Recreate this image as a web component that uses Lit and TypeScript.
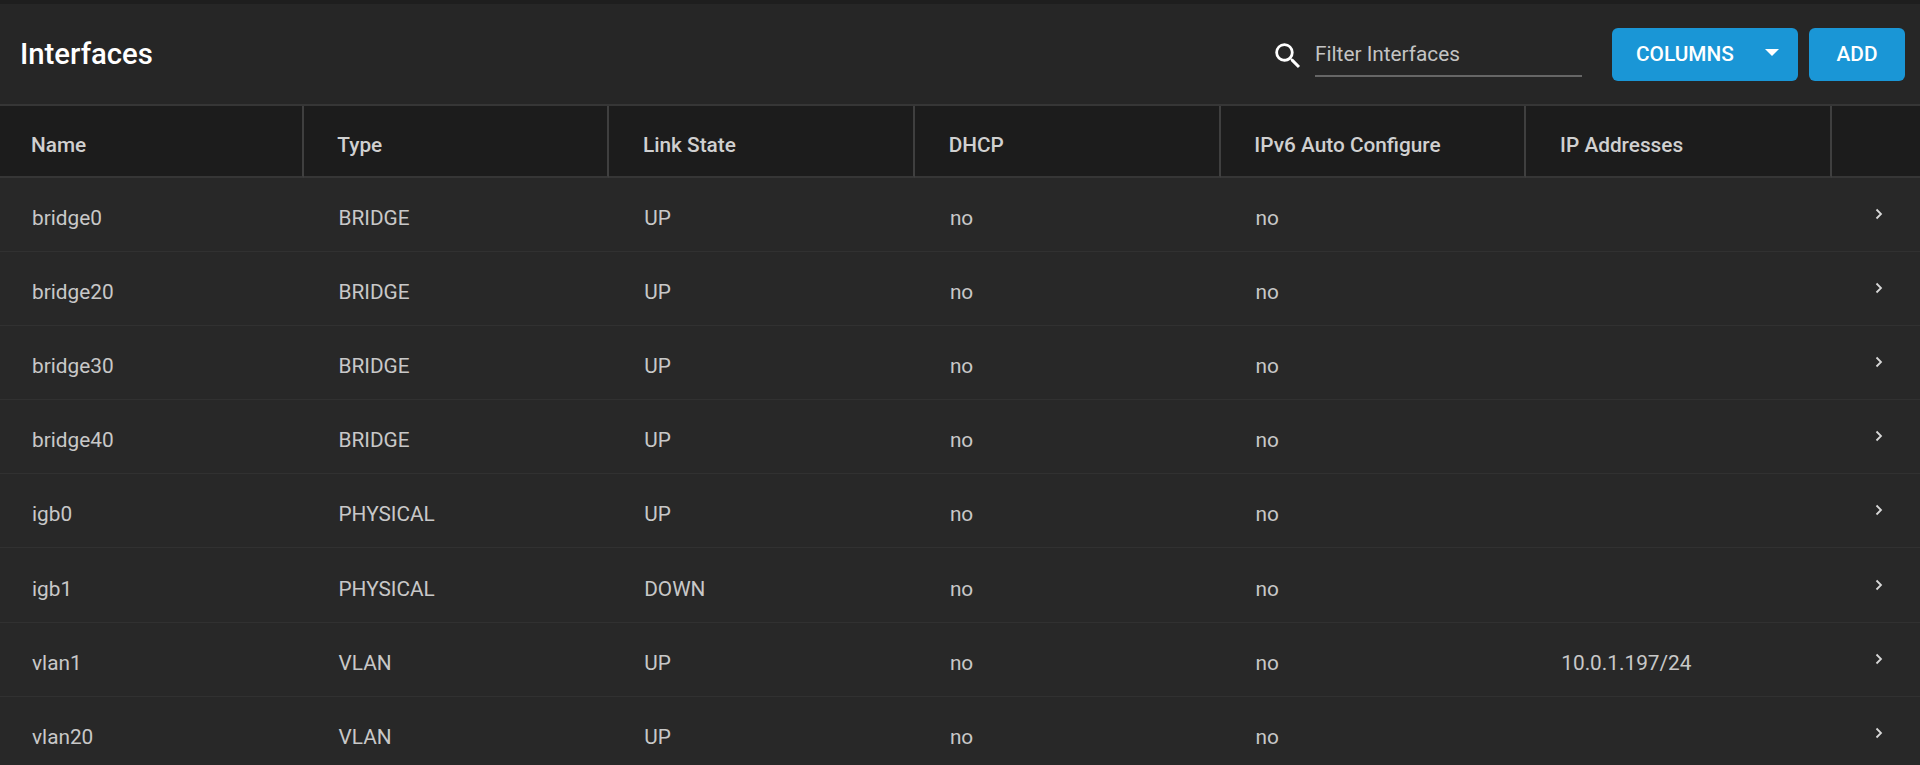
import { LitElement, html, css } from "lit";
import { customElement } from "lit/decorators.js";

const HEADS = ["Name", "Type", "Link State", "DHCP", "IPv6 Auto Configure", "IP Addresses", ""];
const ROWS = [
  ["bridge0", "BRIDGE", "UP", "no", "no", ""],
  ["bridge20", "BRIDGE", "UP", "no", "no", ""],
  ["bridge30", "BRIDGE", "UP", "no", "no", ""],
  ["bridge40", "BRIDGE", "UP", "no", "no", ""],
  ["igb0", "PHYSICAL", "UP", "no", "no", ""],
  ["igb1", "PHYSICAL", "DOWN", "no", "no", ""],
  ["vlan1", "VLAN", "UP", "no", "no", "10.0.1.197/24"],
  ["vlan20", "VLAN", "UP", "no", "no", ""],
];

@customElement("app-root")
export class AppRoot extends LitElement {
  static styles = css`
    :host {
      display: block;
      height: 765px;
      overflow: hidden;
      background: #282828;
      font-family: Roboto, sans-serif;
      color: #cfcfcf;
      border-top: 4px solid #1e1e1e;
      box-sizing: border-box;
    }
    .toolbar {
      height: 102px;
      box-sizing: border-box;
      display: flex;
      align-items: center;
      padding: 0 15px 0 20px;
      background: #262626;
      border-bottom: 2px solid #363636;
    }
    h1 {
      margin: 0;
      font-size: 29.3px;
      font-weight: 500;
      color: #fff;
      flex: 1;
    }
    .filter {
      display: flex;
      align-items: center;
      margin-right: 30px;
    }
    .search {
      width: 34px;
      height: 34px;
      margin: 3px 10px 0 0;
      display: block;
    }
    .input {
      width: 267px;
      height: 46px;
      box-sizing: border-box;
      border-bottom: 2px solid #666;
      font-size: 20.8px;
      line-height: 47px;
      color: #c4c4c4;
    }
    .btn {
      height: 53px;
      display: flex;
      align-items: center;
      box-sizing: border-box;
      background: #1a96d6;
      color: #fff;
      border-radius: 6px;
      font-size: 20.8px;
      font-weight: 500;
    }
    .columns {
      width: 186px;
      padding: 0 19px 0 24px;
      justify-content: space-between;
      margin-right: 11px;
    }
    .caret {
      width: 0;
      height: 0;
      border-left: 7px solid transparent;
      border-right: 7px solid transparent;
      border-top: 7.5px solid #fff;
      margin-top: -3px;
    }
    .add {
      width: 96px;
      justify-content: center;
    }
    .grid {
      display: grid;
      grid-template-columns: 303.5px repeat(5, 305.7px) 1fr;
    }
    .th {
      height: 72px;
      box-sizing: border-box;
      display: flex;
      align-items: center;
      padding: 7px 0 0 33.8px;
      background: #1c1c1c;
      border-right: 2px solid #3f3f3f;
      border-bottom: 2px solid #363636;
      font-size: 20.8px;
      font-weight: 500;
      color: #d0d0d0;
    }
    .th.first {
      padding-left: 31px;
    }
    .th.last {
      border-right: none;
    }
    .td {
      height: 74.1px;
      box-sizing: border-box;
      display: flex;
      align-items: center;
      padding: 7px 0 0 35px;
      border-bottom: 1px solid #313131;
      font-size: 20.8px;
      color: #c8c8c8;
    }
    .td.first {
      padding-left: 32px;
    }
    .chev {
      width: 14px;
      height: 14px;
      margin: -8px 0 0 5px;
      display: block;
    }
  `;

  render() {
    return html`
      <div class="toolbar">
        <h1>Interfaces</h1>
        <div class="filter">
          <svg class="search" viewBox="0 0 24 24" fill="#fff">
            <path d="M15.5 14h-.79l-.28-.27A6.47 6.47 0 0 0 16 9.5 6.5 6.5 0 1 0 9.5 16c1.61 0 3.09-.59 4.23-1.57l.27.28v.79l5 4.99L20.49 19l-4.99-5zm-6 0C7.01 14 5 11.99 5 9.5S7.01 5 9.5 5 14 7.01 14 9.5 11.99 14 9.5 14z" />
          </svg>
          <div class="input">Filter Interfaces</div>
        </div>
        <div class="btn columns"><span>COLUMNS</span><span class="caret"></span></div>
        <div class="btn add">ADD</div>
      </div>
      <div class="grid">
        ${HEADS.map(
          (h, i) => html`<div class="th ${i === 0 ? "first" : ""} ${i === 6 ? "last" : ""}">${h}</div>`
        )}
        ${ROWS.map(
          (r) => html`
            ${r.map((c, i) => html`<div class="td ${i === 0 ? "first" : ""}">${c}</div>`)}
            <div class="td">
              <svg class="chev" viewBox="0 0 14 14" fill="none" stroke="#d8d8d8" stroke-width="1.8">
                <path d="M4.5 2.5 9 7l-4.5 4.5" />
              </svg>
            </div>
          `
        )}
      </div>
    `;
  }
}
